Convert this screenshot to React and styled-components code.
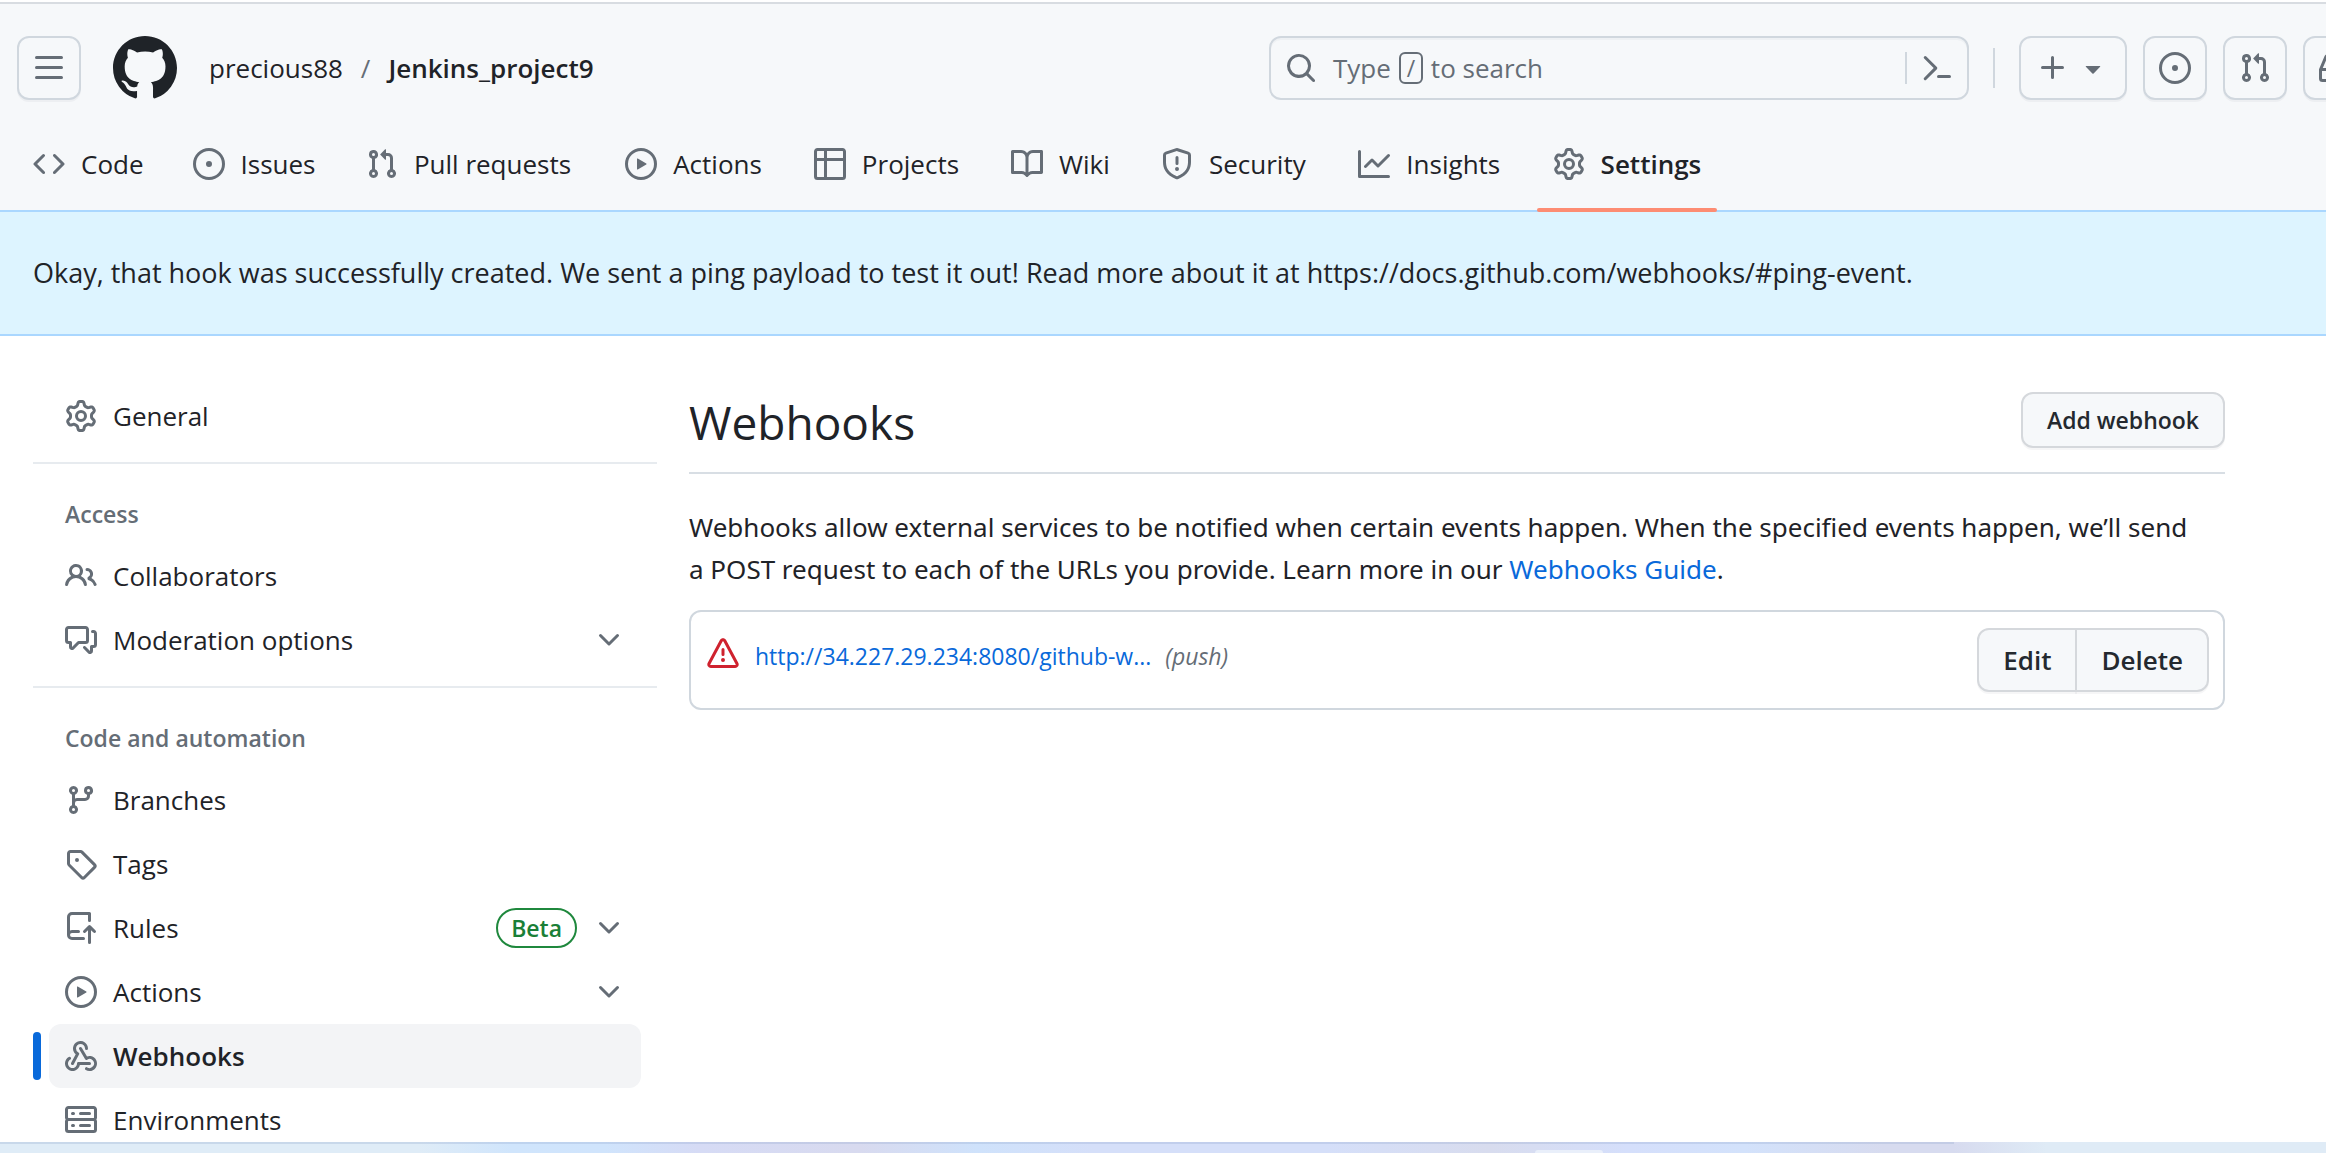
import React from 'react';
import styled, { createGlobalStyle, css } from 'styled-components';

const color = {
  text: '#1f2328',
  muted: '#656d76',
  border: '#d0d7de',
  canvas: '#f6f8fa',
  accent: '#0969da',
};

const GlobalStyle = createGlobalStyle`
  *, *::before, *::after { box-sizing: border-box; }
  body {
    margin: 0;
    background: #ffffff;
    color: ${color.text};
    font-family: "Open Sans", "Noto Sans", sans-serif;
    font-size: 26px;
    line-height: 40px;
  }
  button, input { font: inherit; color: inherit; margin: 0; }
  a { color: inherit; text-decoration: none; }
  ul { list-style: none; margin: 0; padding: 0; }
  h1, h2, p { margin: 0; }
`;

/* ---------- Icons (16-unit grid) ---------- */

const paths = {
  bars: 'M1 2.75A.75.75 0 0 1 1.75 2h12.5a.75.75 0 0 1 0 1.5H1.75A.75.75 0 0 1 1 2.75Zm0 5A.75.75 0 0 1 1.75 7h12.5a.75.75 0 0 1 0 1.5H1.75A.75.75 0 0 1 1 7.75ZM1.75 12h12.5a.75.75 0 0 1 0 1.5H1.75a.75.75 0 0 1 0-1.5Z',
  github: 'M8 0c4.42 0 8 3.58 8 8a8.013 8.013 0 0 1-5.45 7.59c-.4.08-.55-.17-.55-.38 0-.27.01-1.13.01-2.2 0-.75-.25-1.23-.54-1.48 1.78-.2 3.65-.88 3.65-3.95 0-.88-.31-1.59-.82-2.15.08-.2.36-1.02-.08-2.12 0 0-.67-.22-2.2.82-.64-.18-1.32-.27-2-.27-.68 0-1.36.09-2 .27-1.53-1.03-2.2-.82-2.2-.82-.44 1.1-.16 1.92-.08 2.12-.51.56-.82 1.28-.82 2.15 0 3.06 1.86 3.75 3.64 3.95-.23.2-.44.55-.51 1.07-.46.21-1.61.55-2.33-.66-.15-.24-.6-.83-1.23-.82-.67.01-.27.38.01.53.34.19.73.9.82 1.13.16.45.68 1.31 2.69.94 0 .67.01 1.3.01 1.49 0 .21-.15.45-.55.38A7.995 7.995 0 0 1 0 8c0-4.42 3.58-8 8-8Z',
  code: 'm11.28 3.22 4.25 4.25a.75.75 0 0 1 0 1.06l-4.25 4.25a.749.749 0 0 1-1.275-.326.749.749 0 0 1 .215-.734L13.94 8l-3.72-3.72a.749.749 0 0 1 .326-1.275.749.749 0 0 1 .734.215Zm-6.56 0a.751.751 0 0 1 1.042.018.751.751 0 0 1 .018 1.042L2.06 8l3.72 3.72a.749.749 0 0 1-.326 1.275.749.749 0 0 1-.734-.215L.47 8.53a.75.75 0 0 1 0-1.06Z',
  issue: 'M8 9.5a1.5 1.5 0 1 0 0-3 1.5 1.5 0 0 0 0 3Z M8 0a8 8 0 1 1 0 16A8 8 0 0 1 8 0ZM1.5 8a6.5 6.5 0 1 0 13 0 6.5 6.5 0 0 0-13 0Z',
  pull: 'M1.5 3.25a2.25 2.25 0 1 1 3 2.122v5.256a2.251 2.251 0 1 1-1.5 0V5.372A2.25 2.25 0 0 1 1.5 3.25Zm5.677-.177L9.573.677A.25.25 0 0 1 10 .854V2.5h1A2.5 2.5 0 0 1 13.5 5v5.628a2.251 2.251 0 1 1-1.5 0V5a1 1 0 0 0-1-1h-1v1.646a.25.25 0 0 1-.427.177L7.177 3.427a.25.25 0 0 1 0-.354ZM3.75 2.5a.75.75 0 1 0 0 1.5.75.75 0 0 0 0-1.5Zm0 9.5a.75.75 0 1 0 0 1.5.75.75 0 0 0 0-1.5Zm8.25.75a.75.75 0 1 0 1.5 0 .75.75 0 0 0-1.5 0Z',
  play: 'M8 0a8 8 0 1 1 0 16A8 8 0 0 1 8 0ZM1.5 8a6.5 6.5 0 1 0 13 0 6.5 6.5 0 0 0-13 0Zm4.879-2.773 4.264 2.559a.25.25 0 0 1 0 .428l-4.264 2.559A.25.25 0 0 1 6 10.559V5.442a.25.25 0 0 1 .379-.215Z',
  table: 'M0 1.75C0 .784.784 0 1.75 0h12.5C15.216 0 16 .784 16 1.75v12.5A1.75 1.75 0 0 1 14.25 16H1.75A1.75 1.75 0 0 1 0 14.25ZM6.5 6.5v8h7.75a.25.25 0 0 0 .25-.25V6.5Zm8-1.5V1.75a.25.25 0 0 0-.25-.25H6.5V5Zm-13 1.5v7.75c0 .138.112.25.25.25H5v-8ZM5 5V1.5H1.75a.25.25 0 0 0-.25.25V5Z',
  book: 'M0 1.75A.75.75 0 0 1 .75 1h4.253c1.227 0 2.317.59 3 1.501A3.743 3.743 0 0 1 11.006 1h4.245a.75.75 0 0 1 .75.75v10.5a.75.75 0 0 1-.75.75h-4.507a2.25 2.25 0 0 0-1.591.659l-.622.621a.75.75 0 0 1-1.06 0l-.622-.621A2.25 2.25 0 0 0 5.258 13H.75a.75.75 0 0 1-.75-.75Zm7.251 10.324.004-5.073-.002-2.253A2.25 2.25 0 0 0 5.003 2.5H1.5v9h3.757a3.75 3.75 0 0 1 1.994.574ZM8.755 4.75l-.004 7.322a3.752 3.752 0 0 1 1.992-.572H14.5v-9h-3.495a2.25 2.25 0 0 0-2.25 2.25Z',
  shield: 'M7.467.133a1.748 1.748 0 0 1 1.066 0l5.25 1.68A1.75 1.75 0 0 1 15 3.48V7c0 1.566-.32 3.182-1.303 4.682-.983 1.498-2.585 2.813-5.032 3.855a1.697 1.697 0 0 1-1.33 0c-2.447-1.042-4.049-2.357-5.032-3.855C1.32 10.182 1 8.566 1 7V3.48a1.75 1.75 0 0 1 1.217-1.667Zm.61 1.429a.25.25 0 0 0-.153 0l-5.25 1.68a.25.25 0 0 0-.174.238V7c0 1.358.275 2.666 1.057 3.86.784 1.194 2.121 2.34 4.366 3.297a.196.196 0 0 0 .154 0c2.245-.956 3.582-2.104 4.366-3.298C13.225 9.666 13.5 8.36 13.5 7V3.48a.251.251 0 0 0-.174-.237l-5.25-1.68ZM8.75 4.75v3a.75.75 0 0 1-1.5 0v-3a.75.75 0 0 1 1.5 0ZM9 10.5a1 1 0 1 1-2 0 1 1 0 0 1 2 0Z',
  graph: 'M1.5 1.75V13.5h13.75a.75.75 0 0 1 0 1.5H.75a.75.75 0 0 1-.75-.75V1.75a.75.75 0 0 1 1.5 0Zm14.28 2.53-5.25 5.25a.75.75 0 0 1-1.06 0L7 7.06 4.28 9.78a.751.751 0 0 1-1.042-.018.751.751 0 0 1-.018-1.042l3.25-3.25a.75.75 0 0 1 1.06 0L10 7.94l4.72-4.72a.751.751 0 0 1 1.042.018.751.751 0 0 1 .018 1.042Z',
  gear: 'M8 0a8.2 8.2 0 0 1 .701.031C9.444.095 9.99.645 10.16 1.29l.288 1.107c.018.066.079.158.212.224.231.114.454.243.668.386.123.082.233.09.299.071l1.103-.303c.644-.176 1.392.021 1.82.63.27.385.506.792.704 1.218.315.675.111 1.422-.364 1.891l-.814.806c-.049.048-.098.147-.088.294.016.257.016.515 0 .772-.01.147.038.246.088.294l.814.806c.475.469.679 1.216.364 1.891a7.977 7.977 0 0 1-.704 1.217c-.428.61-1.176.807-1.82.63l-1.102-.302c-.067-.019-.177-.011-.3.071a5.909 5.909 0 0 1-.668.386c-.133.066-.194.158-.211.224l-.29 1.106c-.168.646-.715 1.196-1.458 1.26a8.006 8.006 0 0 1-1.402 0c-.743-.064-1.289-.614-1.458-1.26l-.289-1.106c-.018-.066-.079-.158-.212-.224a5.738 5.738 0 0 1-.668-.386c-.123-.082-.233-.09-.299-.071l-1.103.303c-.644.176-1.392-.021-1.82-.63a8.12 8.12 0 0 1-.704-1.218c-.315-.675-.111-1.422.363-1.891l.815-.806c.05-.048.098-.147.088-.294a6.214 6.214 0 0 1 0-.772c.01-.147-.038-.246-.088-.294l-.815-.806C.635 6.045.431 5.298.746 4.623a7.92 7.92 0 0 1 .704-1.217c.428-.61 1.176-.807 1.82-.63l1.102.302c.067.019.177.011.3-.071.214-.143.437-.272.668-.386.133-.066.194-.158.211-.224l.29-1.106C6.009.645 6.556.095 7.299.03 7.53.01 7.764 0 8 0Zm-.571 1.525c-.036.003-.108.036-.137.146l-.289 1.105c-.147.561-.549.967-.998 1.189-.173.086-.34.183-.5.29-.417.278-.97.423-1.529.27l-1.103-.303c-.109-.03-.175.016-.195.045-.22.312-.412.644-.573.99-.014.031-.021.11.059.19l.815.806c.411.406.562.957.53 1.456a4.709 4.709 0 0 0 0 .582c.032.499-.119 1.05-.53 1.456l-.815.806c-.081.08-.073.159-.059.19.162.346.353.677.573.989.02.03.085.076.195.046l1.102-.303c.56-.153 1.113-.008 1.53.27.161.107.328.204.501.29.447.222.85.629.997 1.189l.289 1.105c.029.109.101.143.137.146a6.6 6.6 0 0 0 1.142 0c.036-.003.108-.036.137-.146l.289-1.105c.147-.561.549-.967.998-1.189.173-.086.34-.183.5-.29.417-.278.97-.423 1.529-.27l1.103.303c.109.029.175-.016.195-.045.22-.313.411-.644.573-.99.014-.031.021-.11-.059-.19l-.815-.806c-.411-.406-.562-.957-.53-1.456a4.709 4.709 0 0 0 0-.582c-.032-.499.119-1.05.53-1.456l.815-.806c.081-.08.073-.159.059-.19a6.464 6.464 0 0 0-.573-.989c-.02-.03-.085-.076-.195-.046l-1.102.303c-.56.153-1.113.008-1.53-.27a4.44 4.44 0 0 0-.501-.29c-.447-.222-.85-.629-.997-1.189l-.289-1.105c-.029-.11-.101-.143-.137-.146a6.6 6.6 0 0 0-1.142 0ZM11 8a3 3 0 1 1-6 0 3 3 0 0 1 6 0ZM9.5 8a1.5 1.5 0 1 0-3.001.001A1.5 1.5 0 0 0 9.5 8Z',
  people: 'M2 5.5a3.5 3.5 0 1 1 5.898 2.549 5.508 5.508 0 0 1 3.034 4.084.75.75 0 1 1-1.482.235 4 4 0 0 0-7.9 0 .75.75 0 0 1-1.482-.236A5.507 5.507 0 0 1 3.102 8.05 3.493 3.493 0 0 1 2 5.5ZM11 4a3.001 3.001 0 0 1 2.22 5.018 5.01 5.01 0 0 1 2.56 3.012.749.749 0 0 1-.885.954.752.752 0 0 1-.549-.514 3.507 3.507 0 0 0-2.522-2.372.75.75 0 0 1-.574-.73v-.352a.75.75 0 0 1 .416-.672A1.5 1.5 0 0 0 11 5.5.75.75 0 0 1 11 4Zm-5.5-.5a2 2 0 1 0-.001 3.999A2 2 0 0 0 5.5 3.5Z',
  discussion: 'M1.75 1h8.5c.966 0 1.75.784 1.75 1.75v5.5A1.75 1.75 0 0 1 10.25 10H7.061l-2.574 2.573A1.458 1.458 0 0 1 2 11.543V10h-.25A1.75 1.75 0 0 1 0 8.25v-5.5C0 1.784.784 1 1.75 1ZM1.5 2.75v5.5c0 .138.112.25.25.25h1a.75.75 0 0 1 .75.75v2.19l2.72-2.72a.749.749 0 0 1 .53-.22h3.5a.25.25 0 0 0 .25-.25v-5.5a.25.25 0 0 0-.25-.25h-8.5a.25.25 0 0 0-.25.25Zm13 2a.25.25 0 0 0-.25-.25h-.5a.75.75 0 0 1 0-1.5h.5c.966 0 1.75.784 1.75 1.75v5.5A1.75 1.75 0 0 1 14.25 12H14v1.543a1.458 1.458 0 0 1-2.487 1.03L9.22 12.28a.749.749 0 0 1 .326-1.275.749.749 0 0 1 .734.215l2.22 2.22v-2.19a.75.75 0 0 1 .75-.75h1a.25.25 0 0 0 .25-.25Z',
  branch: 'M9.5 3.25a2.25 2.25 0 1 1 3 2.122V6A2.5 2.5 0 0 1 10 8.5H6a1 1 0 0 0-1 1v1.128a2.251 2.251 0 1 1-1.5 0V5.372a2.25 2.25 0 1 1 1.5 0v1.836A2.493 2.493 0 0 1 6 7h4a1 1 0 0 0 1-1v-.628A2.25 2.25 0 0 1 9.5 3.25Zm-6 0a.75.75 0 1 0 1.5 0 .75.75 0 0 0-1.5 0Zm8.25-.75a.75.75 0 1 0 0 1.5.75.75 0 0 0 0-1.5ZM4.25 12a.75.75 0 1 0 0 1.5.75.75 0 0 0 0-1.5Z',
  tag: 'M1 7.775V2.75C1 1.784 1.784 1 2.75 1h5.025c.464 0 .91.184 1.238.513l6.25 6.25a1.75 1.75 0 0 1 0 2.474l-5.026 5.026a1.75 1.75 0 0 1-2.474 0l-6.25-6.25A1.752 1.752 0 0 1 1 7.775Zm1.5 0c0 .066.026.13.073.177l6.25 6.25a.25.25 0 0 0 .354 0l5.025-5.025a.25.25 0 0 0 0-.354l-6.25-6.25a.25.25 0 0 0-.177-.073H2.75a.25.25 0 0 0-.25.25ZM6 5a1 1 0 1 1 0 2 1 1 0 0 1 0-2Z',
  push: 'M1 2.5A2.5 2.5 0 0 1 3.5 0h8.75a.75.75 0 0 1 .75.75v3.5a.75.75 0 0 1-1.5 0V1.5h-8a1 1 0 0 0-1 1v6.708A2.493 2.493 0 0 1 3.5 9h3.25a.75.75 0 0 1 0 1.5H3.5a1 1 0 0 0 0 2h5.75a.75.75 0 0 1 0 1.5H3.5A2.5 2.5 0 0 1 1 11.5Zm13.23 7.79-1.225-1.224v6.184a.75.75 0 0 1-1.5 0V9.066L10.28 10.29a.75.75 0 0 1-1.06-1.061l2.505-2.504a.75.75 0 0 1 1.06 0L15.29 9.23a.751.751 0 0 1-.018 1.042.751.751 0 0 1-1.042.018Z',
  webhook: 'M5.5 4.25a2.25 2.25 0 0 1 4.5 0 .75.75 0 0 0 1.5 0 3.75 3.75 0 1 0-6.14 2.889l-2.272 4.258a.75.75 0 0 0 1.324.706L7 7.25a.75.75 0 0 0-.309-1.015A2.25 2.25 0 0 1 5.5 4.25Z M7.364 3.607a.75.75 0 0 1 1.03.257l2.608 4.349a3.75 3.75 0 1 1-.628 6.785.75.75 0 0 1 .752-1.299 2.25 2.25 0 1 0-.033-3.88.75.75 0 0 1-1.03-.256L7.107 4.636a.75.75 0 0 1 .257-1.03Z M2.9 8.776A.75.75 0 0 1 2.625 9.8 2.25 2.25 0 1 0 6 11.75a.75.75 0 0 1 .75-.751h5.5a.75.75 0 0 1 0 1.5H7.425a3.751 3.751 0 1 1-5.55-3.998.75.75 0 0 1 1.024.274Z',
  server: 'M1.75 1h12.5c.966 0 1.75.784 1.75 1.75v4c0 .372-.116.717-.314 1 .198.283.314.628.314 1v4a1.75 1.75 0 0 1-1.75 1.75H1.75A1.75 1.75 0 0 1 0 12.75v-4c0-.358.109-.707.314-1a1.739 1.739 0 0 1-.314-1v-4C0 1.784.784 1 1.75 1ZM1.5 2.75v4c0 .138.112.25.25.25h12.5a.25.25 0 0 0 .25-.25v-4a.25.25 0 0 0-.25-.25H1.75a.25.25 0 0 0-.25.25Zm.25 5.75a.25.25 0 0 0-.25.25v4c0 .138.112.25.25.25h12.5a.25.25 0 0 0 .25-.25v-4a.25.25 0 0 0-.25-.25ZM7 4.75A.75.75 0 0 1 7.75 4h4.5a.75.75 0 0 1 0 1.5h-4.5A.75.75 0 0 1 7 4.75ZM7.75 10h4.5a.75.75 0 0 1 0 1.5h-4.5a.75.75 0 0 1 0-1.5ZM3 4.75A.75.75 0 0 1 3.75 4h.5a.75.75 0 0 1 0 1.5h-.5A.75.75 0 0 1 3 4.75ZM3.75 10h.5a.75.75 0 0 1 0 1.5h-.5a.75.75 0 0 1 0-1.5Z',
  alert: 'M6.457 1.047c.659-1.234 2.427-1.234 3.086 0l6.082 11.378A1.75 1.75 0 0 1 14.082 15H1.918a1.75 1.75 0 0 1-1.543-2.575Zm1.763.707a.25.25 0 0 0-.44 0L1.698 13.132a.25.25 0 0 0 .22.368h12.164a.25.25 0 0 0 .22-.368Zm.53 3.996v2.5a.75.75 0 0 1-1.5 0v-2.5a.75.75 0 0 1 1.5 0ZM9 11a1 1 0 1 1-2 0 1 1 0 0 1 2 0Z',
  search: 'M10.68 11.74a6 6 0 0 1-7.922-8.982 6 6 0 0 1 8.982 7.922l3.04 3.04a.749.749 0 0 1-.326 1.275.749.749 0 0 1-.734-.215ZM11.5 7a4.499 4.499 0 1 0-8.997 0A4.499 4.499 0 0 0 11.5 7Z',
  plus: 'M7.75 2a.75.75 0 0 1 .75.75V7h4.25a.75.75 0 0 1 0 1.5H8.5v4.25a.75.75 0 0 1-1.5 0V8.5H2.75a.75.75 0 0 1 0-1.5H7V2.75A.75.75 0 0 1 7.75 2Z',
  triangle: 'm4.427 7.427 3.396 3.396a.25.25 0 0 0 .354 0l3.396-3.396A.25.25 0 0 0 11.396 7H4.604a.25.25 0 0 0-.177.427Z',
  chevron: 'M12.78 5.22a.749.749 0 0 1 0 1.06l-4.25 4.25a.749.749 0 0 1-1.06 0L3.22 6.28a.749.749 0 1 1 1.06-1.06L8 8.939l3.72-3.719a.749.749 0 0 1 1.06 0Z',
  inbox: 'M2.8 2.06A1.75 1.75 0 0 1 4.41 1h7.18c.7 0 1.333.417 1.61 1.06l2.74 6.395c.04.093.06.194.06.295v4.5A1.75 1.75 0 0 1 14.25 15H1.75A1.75 1.75 0 0 1 0 13.25v-4.5c0-.101.02-.202.06-.295Zm1.61.44a.25.25 0 0 0-.23.152L1.887 8H4.75a.75.75 0 0 1 .6.3L6.625 10h2.75l1.275-1.7a.75.75 0 0 1 .6-.3h2.863L11.82 2.652a.25.25 0 0 0-.23-.152Zm10.09 7h-2.875l-1.275 1.7a.75.75 0 0 1-.6.3h-3.5a.75.75 0 0 1-.6-.3L4.375 9.5H1.5v3.75c0 .138.112.25.25.25h12.5a.25.25 0 0 0 .25-.25Z',
  command: 'm6.354 8.04-4.773 4.773a.75.75 0 1 0 1.061 1.06L7.945 8.57a.75.75 0 0 0 0-1.06L2.642 2.206a.75.75 0 0 0-1.06 1.061L6.353 8.04ZM8.75 11.5a.75.75 0 0 0 0 1.5h5.5a.75.75 0 0 0 0-1.5h-5.5Z',
};

const Svg = styled.svg`
  display: block;
  flex: none;
  width: ${(p) => p.$size}px;
  height: ${(p) => p.$size}px;
  fill: ${(p) => p.$fill};
`;

function Icon({ name, size = 32, fill = color.muted }) {
  return (
    <Svg viewBox="0 0 16 16" $size={size} $fill={fill} aria-hidden="true">
      <path d={paths[name]} />
    </Svg>
  );
}

/* ---------- Frame ---------- */

const Screen = styled.div`
  display: flex;
  flex-direction: column;
  height: 100vh;
  padding-top: 2px;
  overflow: hidden;
`;

const Page = styled.div`
  flex: 1;
  min-height: 0;
  overflow: hidden;
`;

const Taskbar = styled.footer`
  display: flex;
  flex: none;
  flex-direction: column;
  justify-content: space-between;
  height: 11px;
  background: linear-gradient(
    90deg,
    #dfecf7 0%, #dfecf7 18%, #d0e5fc 22%, #d0e4fc 26%, #d6dbf5 30%, #d8daef 37%, #cfe2fb 42%,
    #d5dff9 47%, #d5dff9 57%, #d8dcee 64%, #d5dffb 70%, #d3e2fb 75%, #d7dbef 81%, #d7dbef 84%,
    #dfebf6 88%, #dfebf6 100%
  );

  &::before {
    content: "";
    width: 84%;
    height: 2px;
    background: rgba(150, 170, 205, 0.3);
  }

  &::after {
    content: "";
    width: 68px;
    height: 3px;
    margin-left: 66%;
    border-radius: 4px 4px 0 0;
    background: #e9effa;
  }
`;

/* ---------- Header ---------- */

const Header = styled.header`
  background: ${color.canvas};
  border-top: 2px solid #d8dce1;
  border-bottom: 2px solid #aad7ff;
`;

const TopBar = styled.div`
  display: flex;
  align-items: center;
  padding: 32px 0 24px 17px;
`;

const SquareButton = styled.button`
  display: flex;
  flex: none;
  align-items: center;
  justify-content: center;
  gap: 8px;
  width: ${(p) => (p.$wide ? 108 : 64)}px;
  height: 64px;
  padding: 0;
  background: ${color.canvas};
  border: 2px solid ${color.border};
  border-radius: 12px;
  box-shadow: 0 2px 0 rgba(31, 35, 40, 0.04);
`;

const Logo = styled.a`
  margin-left: 32px;
`;

const Breadcrumb = styled.nav`
  display: flex;
  flex: 1;
  min-width: 0;
  gap: 18px;
  padding-left: 32px;
  white-space: nowrap;
`;

const Crumb = styled.a`
  font-weight: ${(p) => (p.$current ? 600 : 400)};
`;

const Slash = styled.span`
  color: ${color.muted};
`;

const SearchBox = styled.form`
  display: flex;
  flex: none;
  align-items: center;
  width: 700px;
  height: 64px;
  padding: 0 14px;
  border: 2px solid ${color.border};
  border-radius: 12px;
  box-shadow: inset 0 2px 0 rgba(208, 215, 222, 0.2);
  color: ${color.muted};
`;

const SearchHint = styled.label`
  display: flex;
  align-items: center;
  gap: 8px;
  padding-left: 16px;
`;

const Key = styled.kbd`
  display: flex;
  align-items: center;
  justify-content: center;
  width: 24px;
  height: 32px;
  border: 2px solid ${color.muted};
  border-radius: 6px;
  font-family: inherit;
  font-size: 23px;
  line-height: 28px;
`;

const SearchInput = styled.input`
  flex: 1;
  min-width: 0;
  height: 40px;
  padding: 0 8px;
  background: transparent;
  border: 0;
  outline: 0;
`;

const CommandButton = styled.button`
  height: 32px;
  padding: 0 0 0 14px;
  background: transparent;
  border: 0;
  border-left: 2px solid ${color.border};
`;

const HeaderActions = styled.div`
  display: flex;
  flex: none;
  align-items: center;
  gap: 16px;
  width: 357px;
  padding-left: 24px;
  overflow-x: clip;
`;

const Separator = styled.span`
  flex: none;
  width: 2px;
  height: 40px;
  margin-right: 8px;
  background: ${color.border};
`;

const Tabs = styled.nav`
  display: flex;
  gap: 16px;
  height: 86px;
  padding-left: 17px;
`;

const Tab = styled.a`
  position: relative;
  display: flex;
  align-items: center;
  gap: 16px;
  height: 80px;
  padding: 0 16px;
  white-space: nowrap;

  ${(p) =>
    p.$active &&
    css`
      font-weight: 600;

      &::after {
        content: "";
        position: absolute;
        right: 0;
        bottom: -8px;
        left: 0;
        height: 4px;
        border-radius: 2px;
        background: #fd8c73;
      }
    `}
`;

/* Keeps room for the bold label so that tabs do not shift when selected. */
const TabLabel = styled.span`
  &::before {
    content: attr(data-label);
    display: block;
    height: 0;
    font-weight: 600;
    visibility: hidden;
  }
`;

const Flash = styled.div`
  padding: 41px 33px;
  background: #ddf4ff;
  border-bottom: 2px solid #aad7ff;
  font-size: 27px;
`;

/* ---------- Body ---------- */

const Columns = styled.div`
  display: grid;
  grid-template-columns: 624px minmax(0, 1fr);
  gap: 32px;
  padding: 48px 101px 0 33px;
`;

const NavGroup = styled.ul`
  display: block;
`;

const GroupTitle = styled.h2`
  margin-top: 14px;
  padding: 32px 32px 12px;
  border-top: 2px solid #e7ebef;
  color: ${color.muted};
  font-size: 23px;
  font-weight: 600;
  line-height: 36px;
`;

const NavLink = styled.a`
  position: relative;
  display: flex;
  align-items: center;
  gap: 16px;
  height: 64px;
  margin: 0 16px;
  padding: 0 16px;
  border-radius: 12px;

  ${(p) =>
    p.$active &&
    css`
      background: #f3f4f6;
      font-weight: 600;

      &::before {
        content: "";
        position: absolute;
        top: 8px;
        bottom: 8px;
        left: -16px;
        width: 8px;
        border-radius: 4px;
        background: ${color.accent};
      }
    `}
`;

const NavText = styled.span`
  flex: 1;
`;

const Badge = styled.span`
  padding: 0 13px;
  border: 2px solid #1f883d;
  border-radius: 20px;
  color: #1a7f37;
  font-size: 23px;
  font-weight: 600;
  line-height: 36px;
`;

const Subhead = styled.div`
  display: flex;
  align-items: center;
  justify-content: space-between;
  padding: 2px 0 18px;
  border-bottom: 2px solid #d8dee4;
`;

const Title = styled.h1`
  padding-top: 4px;
  font-size: 46px;
  font-weight: 400;
  line-height: 64px;
`;

const Button = styled.button`
  height: ${(p) => (p.$small ? 56 : 64)}px;
  padding: 0 24px;
  background: ${color.canvas};
  border: 2px solid #d5d8dc;
  border-radius: 12px;
  box-shadow: 0 2px 0 rgba(31, 35, 40, 0.04);
  color: #24292f;
  font-size: ${(p) => (p.$small ? 23 : 26)}px;
  font-weight: 600;
`;

const ButtonGroup = styled.div`
  display: flex;
  margin-left: auto;

  ${Button}:first-child {
    border-top-right-radius: 0;
    border-bottom-right-radius: 0;
  }
  ${Button}:last-child {
    margin-left: -2px;
    border-top-left-radius: 0;
    border-bottom-left-radius: 0;
  }
`;

const Intro = styled.p`
  padding: 32px 24px 20px 0;
  font-family: "Noto Sans", "Open Sans", sans-serif;
  line-height: 42px;
`;

const Link = styled.a`
  color: ${color.accent};
`;

const HookList = styled.ul`
  border: 2px solid ${color.border};
  border-radius: 12px;
`;

const Hook = styled.li`
  display: flex;
  align-items: flex-start;
  padding: 16px 14px 16px 16px;
`;

const HookStatus = styled.span`
  padding: 10px 16px 0 0;
`;

const HookName = styled.div`
  display: flex;
  gap: 14px;
  padding-top: 10px;
  font-size: 23px;
  line-height: 36px;
`;

const Events = styled.em`
  color: ${color.muted};
`;

const tabs = [
  ['code', 'Code'],
  ['issue', 'Issues'],
  ['pull', 'Pull requests'],
  ['play', 'Actions'],
  ['table', 'Projects'],
  ['book', 'Wiki'],
  ['shield', 'Security'],
  ['graph', 'Insights'],
  ['gear', 'Settings'],
];

const groups = [
  { items: [{ icon: 'gear', label: 'General' }] },
  {
    title: 'Access',
    items: [
      { icon: 'people', label: 'Collaborators' },
      { icon: 'discussion', label: 'Moderation options', expandable: true },
    ],
  },
  {
    title: 'Code and automation',
    items: [
      { icon: 'branch', label: 'Branches' },
      { icon: 'tag', label: 'Tags' },
      { icon: 'push', label: 'Rules', badge: 'Beta', expandable: true },
      { icon: 'play', label: 'Actions', expandable: true },
      { icon: 'webhook', label: 'Webhooks' },
      { icon: 'server', label: 'Environments' },
    ],
  },
];

function Sidebar() {
  return (
    <nav aria-label="Repository settings">
      {groups.map((group) => (
        <React.Fragment key={group.title || 'top'}>
          {group.title && <GroupTitle>{group.title}</GroupTitle>}
          <NavGroup>
            {group.items.map((item) => (
              <li key={item.label}>
                <NavLink href="#" $active={item.label === 'Webhooks'}>
                  <Icon name={item.icon} />
                  <NavText>{item.label}</NavText>
                  {item.badge && <Badge>{item.badge}</Badge>}
                  {item.expandable && <Icon name="chevron" />}
                </NavLink>
              </li>
            ))}
          </NavGroup>
        </React.Fragment>
      ))}
    </nav>
  );
}

export default function App() {
  return (
    <Screen>
      <GlobalStyle />
      <Page>
        <Header>
          <TopBar>
            <SquareButton aria-label="Open menu">
              <Icon name="bars" />
            </SquareButton>
            <Logo href="#" aria-label="Homepage">
              <Icon name="github" size={64} fill={color.text} />
            </Logo>
            <Breadcrumb aria-label="Breadcrumb">
              <Crumb href="#">precious88</Crumb>
              <Slash>/</Slash>
              <Crumb href="#" $current>Jenkins_project9</Crumb>
            </Breadcrumb>
            <SearchBox onSubmit={(e) => e.preventDefault()}>
              <Icon name="search" />
              <SearchHint htmlFor="search">
                Type <Key>/</Key> to search
              </SearchHint>
              <SearchInput id="search" type="text" />
              <CommandButton type="button" aria-label="Command palette">
                <Icon name="command" />
              </CommandButton>
            </SearchBox>
            <HeaderActions>
              <Separator />
              <SquareButton $wide aria-label="Create new">
                <Icon name="plus" />
                <Icon name="triangle" />
              </SquareButton>
              <SquareButton aria-label="Issues">
                <Icon name="issue" />
              </SquareButton>
              <SquareButton aria-label="Pull requests">
                <Icon name="pull" />
              </SquareButton>
              <SquareButton aria-label="Notifications">
                <Icon name="inbox" />
              </SquareButton>
            </HeaderActions>
          </TopBar>
          <Tabs aria-label="Repository">
            {tabs.map(([icon, label]) => (
              <Tab key={label} href="#" $active={label === 'Settings'}>
                <Icon name={icon} />
                <TabLabel data-label={label}>{label}</TabLabel>
              </Tab>
            ))}
          </Tabs>
        </Header>
        <Flash role="status">
          Okay, that hook was successfully created. We sent a ping payload to test it out! Read more about it at
          https://docs.github.com/webhooks/#ping-event.
        </Flash>
        <Columns>
          <Sidebar />
          <main>
            <Subhead>
              <Title>Webhooks</Title>
              <Button $small>Add webhook</Button>
            </Subhead>
            <Intro>
              Webhooks allow external services to be notified when certain events happen. When the specified events
              happen, we’ll send a POST request to each of the URLs you provide. Learn more in our{' '}
              <Link href="#">Webhooks Guide</Link>.
            </Intro>
            <HookList>
              <Hook>
                <HookStatus>
                  <Icon name="alert" fill="#cf222e" />
                </HookStatus>
                <HookName>
                  <Link href="#">http://34.227.29.234:8080/github-w...</Link>
                  <Events>(push)</Events>
                </HookName>
                <ButtonGroup>
                  <Button>Edit</Button>
                  <Button>Delete</Button>
                </ButtonGroup>
              </Hook>
            </HookList>
          </main>
        </Columns>
      </Page>
      <Taskbar />
    </Screen>
  );
}
